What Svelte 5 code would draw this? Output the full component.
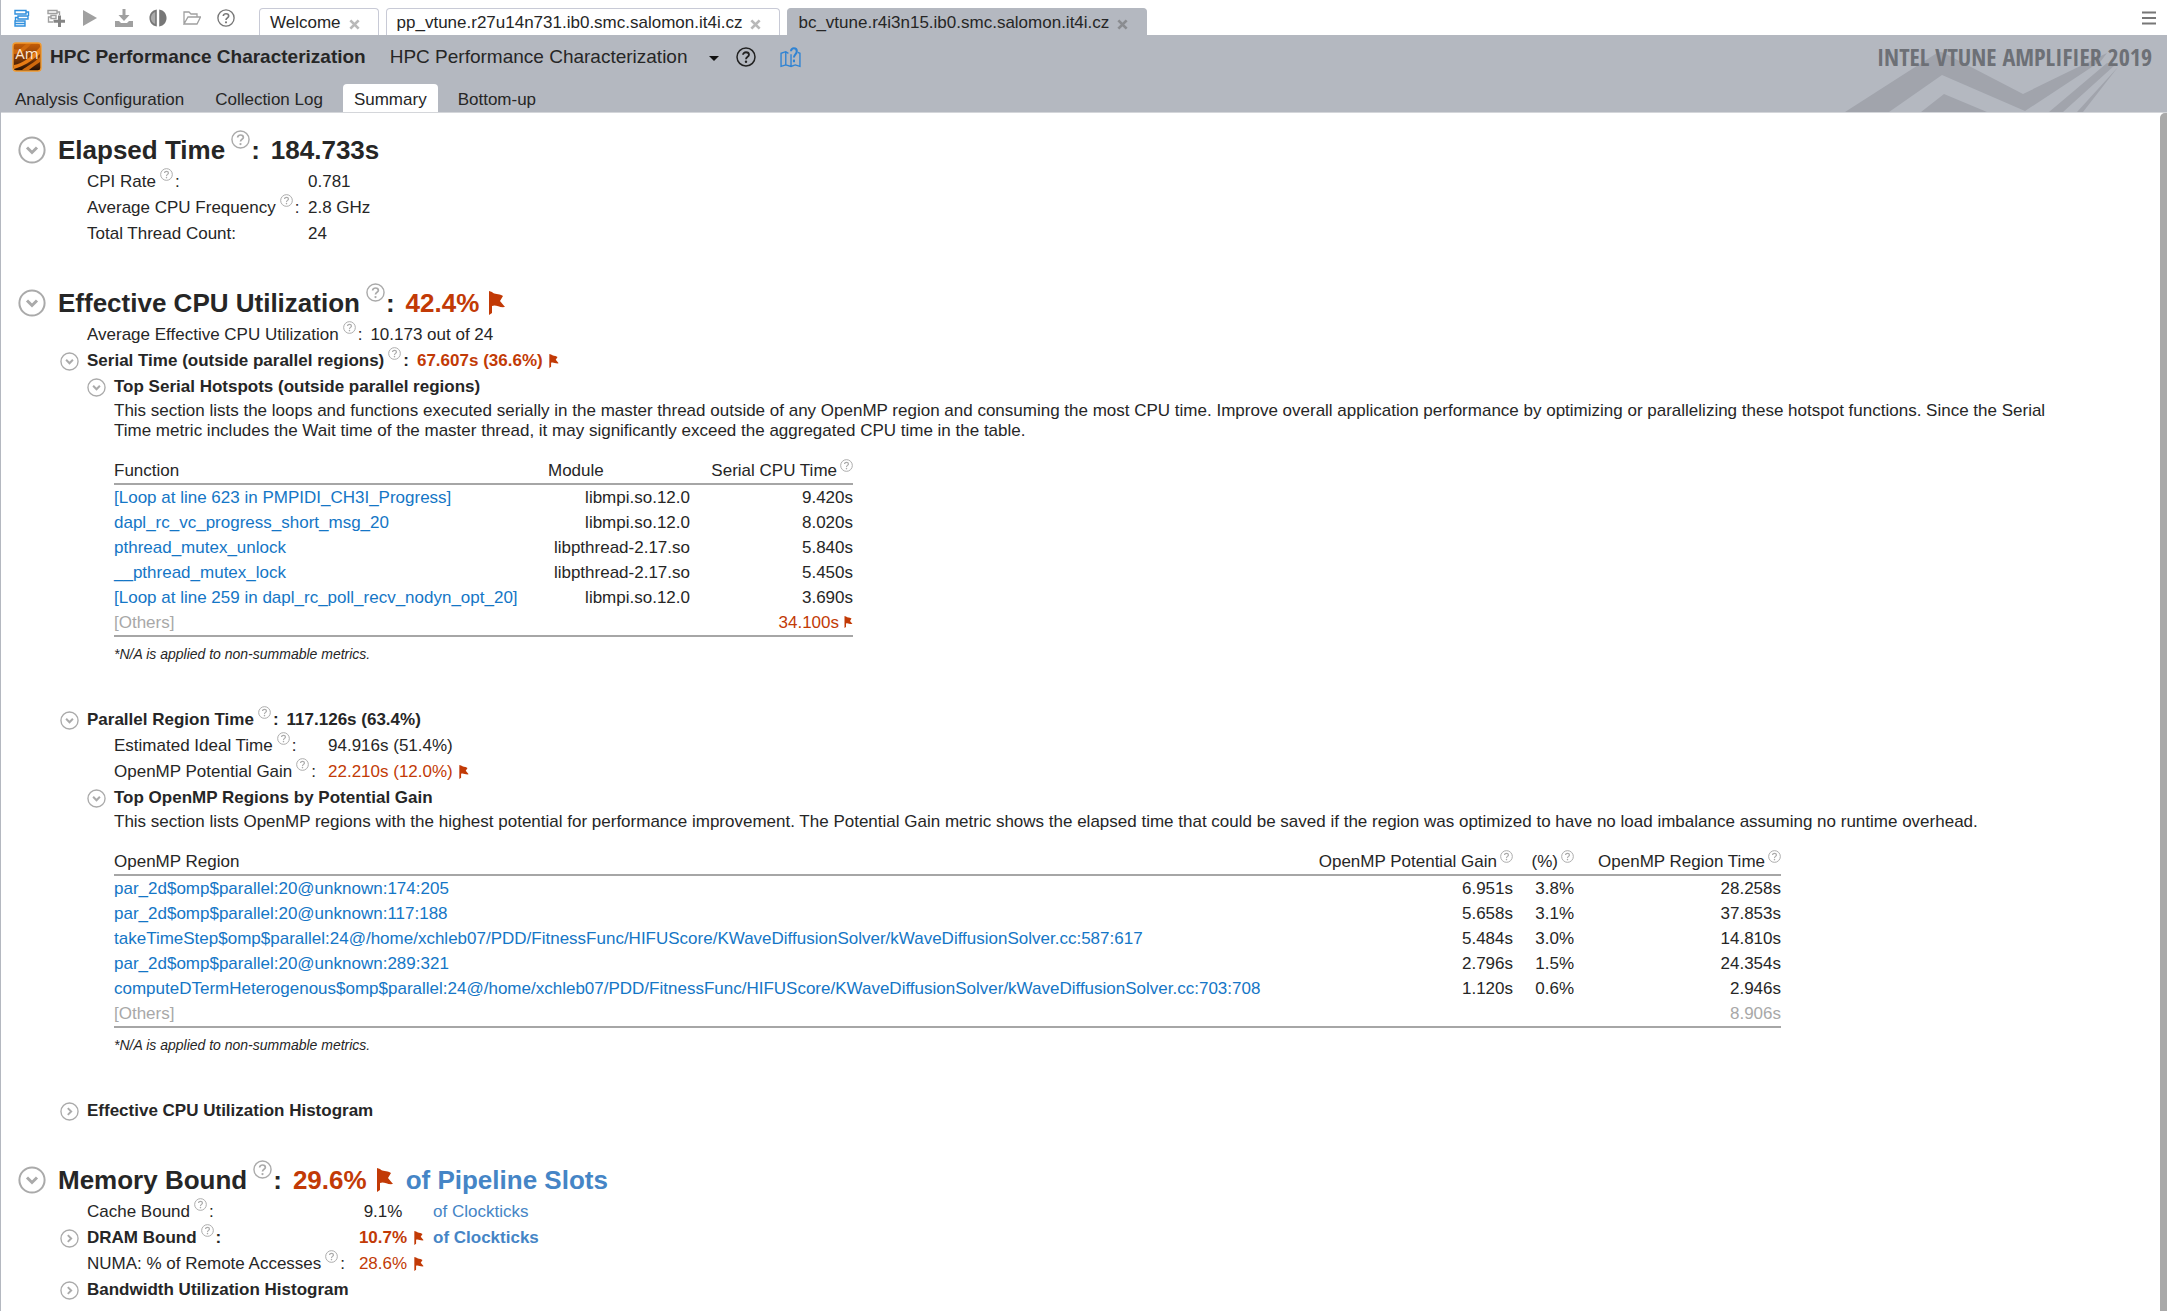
<script>
  let open = $state({ elapsed: true, cpu: true, serial: true, hotspots: true, parallel: true, regions: true, histogram: false, memory: true, dram: false, bandwidth: false });
  let files = $state(['Welcome', 'pp_vtune.r27u14n731.ib0.smc.salomon.it4i.cz', 'bc_vtune.r4i3n15.ib0.smc.salomon.it4i.cz']);
  let activeFile = $state('bc_vtune.r4i3n15.ib0.smc.salomon.it4i.cz');
  const views = ['Analysis Configuration', 'Collection Log', 'Summary', 'Bottom-up'];
  let activeView = $state('Summary');

  const hotspots = [
    ['[Loop at line 623 in PMPIDI_CH3I_Progress]', 'libmpi.so.12.0', '9.420s'],
    ['dapl_rc_vc_progress_short_msg_20', 'libmpi.so.12.0', '8.020s'],
    ['pthread_mutex_unlock', 'libpthread-2.17.so', '5.840s'],
    ['__pthread_mutex_lock', 'libpthread-2.17.so', '5.450s'],
    ['[Loop at line 259 in dapl_rc_poll_recv_nodyn_opt_20]', 'libmpi.so.12.0', '3.690s']
  ];
  const regions = [
    ['par_2d$omp$parallel:20@unknown:174:205', '6.951s', '3.8%', '28.258s'],
    ['par_2d$omp$parallel:20@unknown:117:188', '5.658s', '3.1%', '37.853s'],
    ['takeTimeStep$omp$parallel:24@/home/xchleb07/PDD/FitnessFunc/HIFUScore/KWaveDiffusionSolver/kWaveDiffusionSolver.cc:587:617', '5.484s', '3.0%', '14.810s'],
    ['par_2d$omp$parallel:20@unknown:289:321', '2.796s', '1.5%', '24.354s'],
    ['computeDTermHeterogenous$omp$parallel:24@/home/xchleb07/PDD/FitnessFunc/HIFUScore/KWaveDiffusionSolver/kWaveDiffusionSolver.cc:703:708', '1.120s', '0.6%', '2.946s']
  ];
</script>

{#snippet help()}
  <svg class="help" viewBox="0 0 20 20" aria-hidden="true">
    <circle cx="10" cy="10" r="9" fill="none" stroke="currentColor" stroke-width="1.5" />
    <path d="M7 7.8C7 4.4 13 4.4 13 7.8C13 9.8 10 9.8 10 12.2" fill="none" stroke="currentColor" stroke-width="1.8" />
    <circle cx="10" cy="14.8" r="1.2" fill="currentColor" />
  </svg>
{/snippet}

{#snippet flag()}
  <svg class="flag" viewBox="0 0 16 24" aria-hidden="true">
    <path d="M0 0L3 1C6 4 9 2 14 5L11 10L16 16C10 17 7 13 3 15V22L0 24Z" fill="currentColor" />
  </svg>
{/snippet}

{#snippet toggle(key, label)}
  <button class="toggle" aria-label={label} aria-expanded={open[key]} onclick={() => (open[key] = !open[key])}>
    <svg viewBox="0 0 28 28" aria-hidden="true">
      <circle cx="14" cy="14" r="12.6" fill="none" stroke="currentColor" stroke-width="2" />
      {#if open[key]}
        <path d="M9 11.5L14 16.5L19 11.5" fill="none" stroke="currentColor" stroke-width="3" />
      {:else}
        <path d="M11.5 9L16.5 14L11.5 19" fill="none" stroke="currentColor" stroke-width="2.8" />
      {/if}
    </svg>
  </button>
{/snippet}

<div class="app">
  <div class="toolbar">
    <div class="tools">
      <button class="tool blue" aria-label="Project navigator">
        <svg viewBox="0 0 18 18" fill="none" stroke="currentColor" stroke-width="1.4"><path d="M2 1.5H13V5H2ZM5 7H15V10H5ZM2 12H12V17H2ZM2 14.5H12M13 3H15.5V7M5 8.5H2.5V12" /></svg>
      </button>
      <button class="tool" aria-label="New analysis">
        <svg viewBox="0 0 18 18" fill="none" stroke="currentColor" stroke-width="1.4"><path d="M1 1.5H10V4.5H1ZM4 6.5H9V9.5H4ZM10 3H12.5V6M4 8H1.5V13H6" /><path d="M12.5 6.5V18M6.5 12.3H18.5" stroke-width="3" stroke="#858585" /></svg>
      </button>
      <button class="tool" aria-label="Start">
        <svg viewBox="0 0 18 18" fill="currentColor"><path d="M2 1L16 9L2 17Z" /></svg>
      </button>
      <button class="tool" aria-label="Import result">
        <svg viewBox="0 0 18 18" fill="currentColor"><path d="M7.5 0H10.5V6H14.5L9 12L3.5 6H7.5ZM0 12H4L6 14H12L14 12H18V18H0Z" /></svg>
      </button>
      <button class="tool dark" aria-label="Compare results">
        <svg viewBox="0 0 18 18" fill="currentColor"><path d="M7.8 .5V17.5C-2 16 -2 2 7.8 .5ZM10.2 .5C20 2 20 16 10.2 17.5Z" /><path d="M6.2 3V15C.5 13 .5 5 6.2 3Z" fill="#aaa" /></svg>
      </button>
      <button class="tool" aria-label="Open result">
        <svg viewBox="0 0 18 18" fill="none" stroke="currentColor" stroke-width="1.3"><path d="M1 15V3H6L8 5H14V8M1 15H14L17.5 8H5Z" /></svg>
      </button>
      <button class="tool dark" aria-label="Help">{@render help()}</button>
    </div>
    <div class="files">
      {#each files as file}
        <div class="file" class:active={file === activeFile}>
          <button class="file-name" onclick={() => (activeFile = file)}>{file}</button>
          <button class="close" aria-label={`Close ${file}`} onclick={() => (files = files.filter((f) => f !== file))}>
            <svg viewBox="0 0 12 12"><path d="M1.5 1.5L10.5 10.5M10.5 1.5L1.5 10.5" stroke="currentColor" stroke-width="3" /></svg>
          </button>
        </div>
      {/each}
    </div>
    <button class="menu" aria-label="Menu">
      <svg viewBox="0 0 14 14"><path d="M0 1.5H14M0 7H14M0 12.5H14" stroke="currentColor" stroke-width="2.2" /></svg>
    </button>
  </div>

  <header>
    <svg class="mountains" viewBox="0 0 322 77" aria-hidden="true">
      <path d="M0 77L92 18Q95 16 99 18L178 59L262 18L256 26L180 76L97 40L44 77ZM76 77L99 59L142 77ZM204 77L262 28L270 30L218 77ZM232 77L273 32L238 77Z" fill="#a1a4ac" />
    </svg>
    <div class="title-row">
      <svg class="logo" viewBox="0 0 30 30" aria-hidden="true">
        <defs><linearGradient id="amber" x1="0" y1="0" x2="0" y2="1"><stop offset="0" stop-color="#c65e08" /><stop offset=".5" stop-color="#8a3c05" /><stop offset="1" stop-color="#1c0d05" /></linearGradient></defs>
        <rect x="1" y="1" width="28" height="28" rx="3" fill="url(#amber)" stroke="#f39a2e" stroke-width="1.4" />
        <path d="M2 23C11 21 17 17 28 5V12C18 20 12 24 2 27Z" fill="#e87c15" />
        <path d="M10 28C15 24 22 21 28 15V20C24 23 20 25 17 28ZM2 7C8 9 10 5 14 2H19C14 8 9 12 2 12Z" fill="#cf690d" />
        <text x="15" y="17" text-anchor="middle" fill="#fbe6d2" font-family="Open Sans, sans-serif" font-size="15">Am</text>
      </svg>
      <h1>HPC Performance Characterization</h1>
      <div class="picker">
        <select aria-label="Viewpoint"><option>HPC Performance Characterization</option></select>
        <svg class="caret" viewBox="0 0 10 5" aria-hidden="true"><path d="M0 0H10L5 5Z" fill="#111" /></svg>
      </div>
      <button class="about" aria-label="Viewpoint help">{@render help()}</button>
      <button class="guide" aria-label="Guide">
        <svg viewBox="0 0 20 20" fill="none" stroke="currentColor" stroke-width="1.3"><path d="M8 6L5.5 4.5L1 6V18.5L5.5 17L10.5 18.5L14.5 17L19 18.5V6L17 5.2M5.5 5V17M10.5 7V18.5" /><path d="M10.5 4C10.5 0 16 .5 16 4C16 7 13.3 7 13.3 10" stroke-width="2" /><path d="M13.3 12V14.5" stroke-width="2" /></svg>
      </button>
      <div class="brand">INTEL VTUNE AMPLIFIER 2019</div>
    </div>
    <nav>
      {#each views as view}
        <button class:active={view === activeView} onclick={() => (activeView = view)}>{view}</button>
      {/each}
    </nav>
  </header>

  <div class="body">
    <main>
      <section>
        <h2>{@render toggle('elapsed', 'Elapsed Time')}<span>Elapsed Time</span>{@render help()}<span>:</span><span class="value">184.733s</span></h2>
        {#if open.elapsed}
          <dl class="metrics general">
            <div><dt>CPI Rate{@render help()}:</dt><dd>0.781</dd></div>
            <div><dt>Average CPU Frequency{@render help()}:</dt><dd>2.8 GHz</dd></div>
            <div><dt>Total Thread Count:</dt><dd>24</dd></div>
          </dl>
        {/if}
      </section>

      <section>
        <h2>{@render toggle('cpu', 'Effective CPU Utilization')}<span>Effective CPU Utilization</span>{@render help()}<span>:</span><span class="value hot">42.4%{@render flag()}</span></h2>
        {#if open.cpu}
          <div class="level">
            <p class="row"><span>Average Effective CPU Utilization</span>{@render help()}<span>:</span><span class="value">10.173 out of 24</span></p>
            <h3>{@render toggle('serial', 'Serial Time')}<span>Serial Time (outside parallel regions)</span>{@render help()}<span>:</span><span class="value hot">67.607s (36.6%){@render flag()}</span></h3>
            {#if open.serial}
              <div class="nested">
                <h3>{@render toggle('hotspots', 'Top Serial Hotspots')}<span>Top Serial Hotspots (outside parallel regions)</span></h3>
                {#if open.hotspots}
                  <p class="about-text">This section lists the loops and functions executed serially in the master thread outside of any OpenMP region and consuming the most CPU time. Improve overall application performance by optimizing or parallelizing these hotspot functions. Since the Serial Time metric includes the Wait time of the master thread, it may significantly exceed the aggregated CPU time in the table.</p>
                  <table class="hotspots">
                    <thead><tr><th class="name">Function</th><th class="module">Module</th><th>Serial CPU Time{@render help()}</th></tr></thead>
                    <tbody>
                      {#each hotspots as [name, module, time]}
                        <tr><td class="name"><a href="#source">{name}</a></td><td>{module}</td><td>{time}</td></tr>
                      {/each}
                      <tr class="others"><td class="name">[Others]</td><td></td><td class="hot">34.100s{@render flag()}</td></tr>
                    </tbody>
                  </table>
                  <p class="note">*N/A is applied to non-summable metrics.</p>
                {/if}
              </div>
            {/if}
            <h3 class="spaced">{@render toggle('parallel', 'Parallel Region Time')}<span>Parallel Region Time</span>{@render help()}<span>:</span><span class="value">117.126s (63.4%)</span></h3>
            {#if open.parallel}
              <div class="nested">
                <dl class="metrics gain">
                  <div><dt>Estimated Ideal Time{@render help()}:</dt><dd>94.916s (51.4%)</dd></div>
                  <div><dt>OpenMP Potential Gain{@render help()}:</dt><dd class="hot">22.210s (12.0%){@render flag()}</dd></div>
                </dl>
                <h3>{@render toggle('regions', 'Top OpenMP Regions')}<span>Top OpenMP Regions by Potential Gain</span></h3>
                {#if open.regions}
                  <p class="about-text">This section lists OpenMP regions with the highest potential for performance improvement. The Potential Gain metric shows the elapsed time that could be saved if the region was optimized to have no load imbalance assuming no runtime overhead.</p>
                  <table class="regions">
                    <thead><tr><th class="name">OpenMP Region</th><th class="potential">OpenMP Potential Gain{@render help()}</th><th class="percent">(%){@render help()}</th><th>OpenMP Region Time{@render help()}</th></tr></thead>
                    <tbody>
                      {#each regions as [name, gain, percent, time]}
                        <tr><td class="name"><a href="#source">{name}</a></td><td>{gain}</td><td>{percent}</td><td>{time}</td></tr>
                      {/each}
                      <tr class="others"><td class="name">[Others]</td><td></td><td></td><td>8.906s</td></tr>
                    </tbody>
                  </table>
                  <p class="note">*N/A is applied to non-summable metrics.</p>
                {/if}
              </div>
            {/if}
            <h3 class="spaced">{@render toggle('histogram', 'Effective CPU Utilization Histogram')}<span>Effective CPU Utilization Histogram</span></h3>
          </div>
        {/if}
      </section>

      <section>
        <h2>{@render toggle('memory', 'Memory Bound')}<span>Memory Bound</span>{@render help()}<span>:</span><span class="value hot">29.6%{@render flag()}</span><span class="unit">of Pipeline Slots</span></h2>
        {#if open.memory}
          <dl class="metrics memory">
            <div><dt>Cache Bound{@render help()}:</dt><dd><span class="amount">9.1%</span><span class="unit">of Clockticks</span></dd></div>
            <div class="strong"><dt>{@render toggle('dram', 'DRAM Bound')}DRAM Bound{@render help()}:</dt><dd><span class="amount hot">10.7%</span><span class="hot mark">{@render flag()}</span><span class="unit">of Clockticks</span></dd></div>
            <div><dt>NUMA: % of Remote Accesses{@render help()}:</dt><dd><span class="amount hot">28.6%</span><span class="hot mark">{@render flag()}</span></dd></div>
          </dl>
          <div class="level"><h3>{@render toggle('bandwidth', 'Bandwidth Utilization Histogram')}<span>Bandwidth Utilization Histogram</span></h3></div>
        {/if}
      </section>
    </main>
    <div class="scrollbar"></div>
  </div>
</div>

<style>
  :global(body) { margin: 0; background: #fff; }
  .app { box-sizing: border-box; height: 100vh; display: flex; flex-direction: column; overflow: hidden; border-left: 1px solid #b4b8c0; font: 17px/20px "Liberation Sans", Arial, sans-serif; color: #262626; }
  button, select { font: inherit; color: inherit; background: none; border: 0; padding: 0; margin: 0; }
  button { cursor: pointer; }
  svg { display: block; flex: none; }
  h1, h2, h3, p, dl, dd { margin: 0; }
  a { color: #1476c6; text-decoration: none; }

  .toolbar { display: flex; align-items: flex-end; height: 35px; flex: none; }
  .tools { display: flex; align-items: center; gap: 16px; height: 35px; padding: 0 24px 0 12px; }
  .tool { color: #a0a0a0; }
  .tool svg, .tool :global(.help) { width: 18px; height: 18px; color: inherit; }
  .tool.blue { color: #2f8fdd; }
  .tool.dark { color: #777; }
  .files { display: flex; gap: 7px; flex: 1; }
  .file { display: flex; align-items: center; gap: 8px; box-sizing: border-box; height: 27px; padding: 2px 18px 0 10px; border: 1px solid #c8cad6; border-bottom: 0; border-radius: 4px 4px 0 0; }
  .file.active { background: #b4b8c0; border-color: #b4b8c0; }
  .close { color: #b9b9b9; padding-top: 2px; }
  .active .close { color: #8a8c90; }
  .close svg { width: 11px; height: 11px; }
  .menu { color: #777; padding: 0 11px 10px 0; }
  .menu svg { width: 14px; height: 14px; }

  header { position: relative; flex: none; background: #b4b8c0; border-bottom: 1px solid #d4d6da; }
  .mountains { position: absolute; right: 0; bottom: 0; width: 322px; height: 77px; }
  .title-row { position: relative; display: flex; align-items: center; height: 44px; padding: 0 15px 0 11px; font-size: 19px; }
  .logo { width: 30px; height: 30px; }
  h1 { font-size: 19px; padding: 0 24px 0 8px; }
  .picker { position: relative; }
  .picker select { appearance: none; padding-right: 31px; }
  .caret { position: absolute; right: 0; top: 9px; width: 10px; height: 5px; pointer-events: none; }
  .about { margin-left: 17px; color: #222; }
  .about :global(.help) { width: 20px; height: 20px; color: inherit; }
  .guide { margin-left: 24px; color: #2f83d3; }
  .guide svg { width: 21px; height: 21px; }
  .brand { margin-left: auto; font: bold 24px/30px "Open Sans Condensed", "Roboto Condensed", "Liberation Sans Narrow", "Liberation Sans", sans-serif; color: #6d7076; }
  nav { position: relative; display: flex; padding: 5px 0 0 3px; }
  nav button { height: 28px; padding: 3px 11px 0; margin-right: 9px; border-radius: 4px 4px 0 0; }
  nav button.active { background: #fff; }

  .body { display: flex; flex: 1; min-height: 0; }
  main { flex: 1; padding: 18px 90px 0 17px; overflow: hidden; }
  .scrollbar { width: 7px; background: #a9a9a9; border-radius: 5px 0 0 0; }
  section { margin-bottom: 37px; }
  h2 { display: flex; align-items: center; height: 38px; font-size: 26px; line-height: 30px; }
  h3, .row, .metrics > div { display: flex; align-items: center; height: 26px; }
  h3 { font-size: 17px; }
  .help { width: 13px; height: 13px; color: #aaa; align-self: flex-start; }
  h3 .help, .row .help, dt .help { margin: -1px 2px 0 4px; }
  h2 .help { width: 19px; height: 19px; margin: -1px 1px 0 6px; }
  .toggle { color: #aaa; }
  h2 .toggle svg { width: 28px; height: 28px; margin-right: 12px; }
  h3 .toggle svg, dt .toggle svg { width: 19px; height: 19px; margin-right: 8px; }
  .value { display: flex; align-items: center; margin-left: 8px; }
  h2 .value { margin-left: 11px; }
  .hot { color: #c23a06; }
  .flag { width: 10px; height: 14px; }
  .value .flag, dd .flag { margin-left: 6px; }
  h2 .value .flag { width: 16px; height: 24px; margin-left: 10px; }
  .unit { color: #4585c6; }
  h2 .unit { margin-left: 13px; }

  .level { padding-left: 69px; }
  .level > h3, .nested > h3 { margin-left: -27px; }
  .nested { padding-left: 27px; }
  .metrics { padding-left: 69px; }
  .metrics dt { display: flex; align-items: center; align-self: stretch; }
  .metrics dd { display: flex; align-items: center; }
  .general dt { width: 221px; }
  .gain { padding-left: 0; }
  .gain dt { width: 214px; }
  .memory dt { width: 271px; }
  .memory .strong { font-weight: bold; margin-left: -27px; }
  .memory .strong dt { width: 298px; }
  .amount { width: 50px; text-align: center; }
  .amount + .unit { margin-left: 25px; }
  .mark { width: 25px; }
  h3.spaced { margin-top: 43px; }

  .about-text { line-height: 20px; padding-top: 1px; }
  table { border-collapse: collapse; margin: 17px 0 7px; line-height: 25px; border-bottom: 2px solid #a6a6a6; }
  th { font-weight: normal; border-bottom: 2px solid #a6a6a6; white-space: nowrap; }
  th, td { height: 25px; padding: 0; text-align: right; }
  th .help { display: inline-block; vertical-align: 4px; margin-left: 3px; }
  .name, .module { text-align: left; }
  td .flag { display: inline-block; width: 9px; height: 12px; margin-left: 5px; }
  .others .name, .others td:not(.hot) { color: #a8a8a8; }
  .hotspots .name { width: 434px; }
  .hotspots .module { width: 142px; }
  .hotspots th:last-child { width: 163px; }
  .regions .name { width: 1199px; }
  .regions .potential { width: 200px; }
  .regions .percent { width: 61px; }
  .regions th:last-child { width: 207px; }
  .note { font-size: 14px; font-style: italic; line-height: 20px; }
</style>
